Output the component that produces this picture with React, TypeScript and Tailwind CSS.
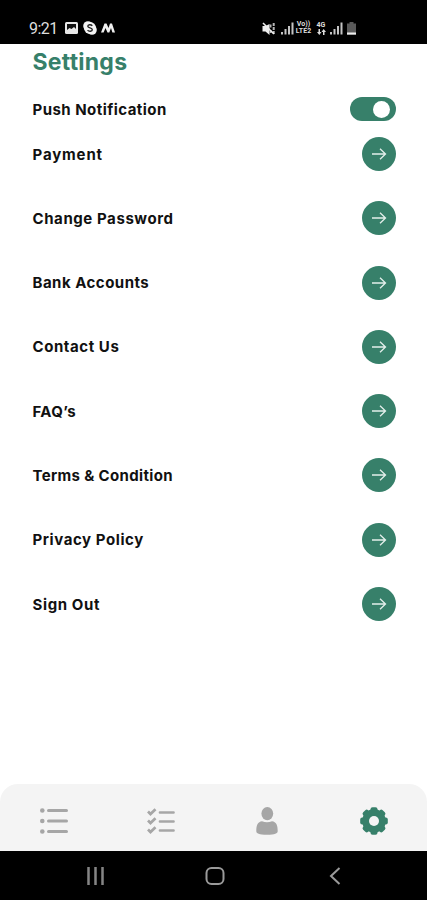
import React from 'react';

interface SettingItem {
  label: string;
  spacing: string;
}

const settings: SettingItem[] = [
  { label: 'Payment', spacing: 'tracking-[0.85px]' },
  { label: 'Change Password', spacing: 'tracking-[0.58px]' },
  { label: 'Bank Accounts', spacing: 'tracking-[0.49px]' },
  { label: 'Contact Us', spacing: 'tracking-[0.57px]' },
  { label: 'FAQ’s', spacing: 'tracking-[0.35px]' },
  { label: 'Terms & Condition', spacing: 'tracking-[0.35px]' },
  { label: 'Privacy Policy', spacing: 'tracking-[0.58px]' },
  { label: 'Sign Out', spacing: 'tracking-[0.62px]' },
];

const SignalIcon: React.FC = () => (
  <svg width="13" height="13" viewBox="0 0 13 13" fill="#c4c4c4">
    <rect x="0" y="10" width="2" height="2.5" />
    <rect x="3.5" y="7" width="2" height="5.5" />
    <rect x="7" y="4" width="2" height="8.5" />
    <rect x="10.5" y="0.5" width="2" height="12" />
  </svg>
);

const StatusBar: React.FC = () => (
  <header className="flex h-11 items-start justify-between bg-black pl-[29px] pr-[71px] pt-[21px] text-[#dedede]">
    <div className="flex h-3.5 items-center">
      <span className="w-[36px] pt-px font-[Roboto] text-[16px] leading-none tracking-[-0.5px]">9:21</span>
      <svg width="13" height="12" viewBox="0 0 13 12">
        <rect width="13" height="12" rx="1.5" fill="#e8e8e8" />
        <path d="M2 2h9v5L9 5 6.5 7 4.5 6 2 8z" fill="#111" />
      </svg>
      <svg className="ml-[5px]" width="14" height="14" viewBox="0 0 14 14">
        <circle cx="5" cy="5" r="4.8" fill="#f4f4f4" />
        <circle cx="9" cy="9" r="4.8" fill="#f4f4f4" />
        <circle cx="7" cy="7" r="6" fill="#f4f4f4" />
        <path d="M9.3 4.8C8 3.2 4.8 3.5 4.8 5.2c0 2 4.5 1.4 4.5 3.5 0 1.9-3.4 2.2-4.7.4" fill="none" stroke="#222" strokeWidth="1.4" />
      </svg>
      <svg className="ml-[4px]" width="14" height="10" viewBox="0 0 14 10" fill="#f0f0f0">
        <path d="M0 9.5 3.5.5h2L7.5 5 9 .5h2l3 9h-2.6L10 5 8.3 9.5H6.5L4.5 5 2.6 9.5z" />
      </svg>
    </div>
    <div className="flex h-3.5 items-center">
      <svg width="14" height="13" viewBox="0 0 14 13">
        <path d="M0.5 4h3l4-2v11L3.5 9.5h-3z" fill="#eee" />
        <path d="M8.5 2.5v3M8.5 8v4M11.7 1v11.5" stroke="#b5b5b5" strokeWidth="2" strokeDasharray="3 1" />
        <path d="m1 1 11 11" stroke="#eee" strokeWidth="1.6" />
      </svg>
      <span className="ml-[5px]"><SignalIcon /></span>
      <div className="ml-px w-[17px] text-center font-[Roboto] text-[7px] font-bold leading-[7px]">
        <div>Vo))</div>
        <div>LTE2</div>
      </div>
      <div className="ml-[4px] flex w-[10px] flex-col items-center font-[Roboto] text-[7px] font-bold leading-[7px]">
        <span>4G</span>
        <svg width="9" height="6" viewBox="0 0 9 6" fill="#ddd">
          <path d="M1.5 0H3v3h1.5L2.3 6 0 3h1.5zM6 6h1.5V3H9L6.7 0 4.5 3H6z" />
        </svg>
      </div>
      <span className="ml-[4px]"><SignalIcon /></span>
      <svg className="ml-[4px]" width="9" height="13" viewBox="0 0 9 13">
        <path d="M2.5 0h4v1.5H9V13H0V1.5h2.5z" fill="#5a5a5a" />
        <rect y="10.5" width="9" height="2" fill="#eee" />
      </svg>
    </div>
  </header>
);

const SettingRow: React.FC<{ item: SettingItem }> = ({ item }) => (
  <li className="flex h-[64.3px] items-start justify-between">
    <span className={`pt-[0.5px] text-[15px] font-bold leading-[34px] ${item.spacing}`}>{item.label}</span>
    <button aria-label={item.label} className="flex size-[34px] items-center justify-center rounded-full bg-[#37806a]">
      <svg width="16" height="14" viewBox="0 0 16 14" fill="none" stroke="#e3eeea" strokeWidth="1.3">
        <path d="M1 7h13.5M9 1.8 14.5 7 9 12.2" />
      </svg>
    </button>
  </li>
);

const TabBar: React.FC = () => (
  <nav className="flex h-[67px] items-center rounded-t-[18px] bg-[#f4f4f4] pl-px pt-[6px]">
    <button aria-label="List" className="flex flex-1 justify-center">
      <svg width="28" height="26" viewBox="0 0 28 26" fill="#a6a6a6" stroke="#a6a6a6" strokeLinecap="round">
        <path d="M8.5 2.5h18M8.5 13h18M8.5 23.5h18" strokeWidth="3" />
        <g stroke="none">
          <circle cx="2.3" cy="2.5" r="2.3" />
          <circle cx="2.3" cy="13" r="2.3" />
          <circle cx="2.3" cy="23.5" r="2.3" />
        </g>
      </svg>
    </button>
    <button aria-label="Tasks" className="flex flex-1 justify-center">
      <svg width="28" height="26" viewBox="0 0 28 26" fill="none" stroke="#a6a6a6" strokeWidth="2.7">
        <path d="M13 4.5h13.5M13 13.5h13.5M13 22.5h13.5" strokeLinecap="round" />
        <path d="m1 3.5 2.5 2.5L8.5 1.2M1 12.5 3.5 15l5-4.8M1 21.5 3.5 24l5-4.8" />
      </svg>
    </button>
    <button aria-label="Profile" className="flex flex-1 justify-center">
      <svg width="22" height="28" viewBox="0 0 22 28" fill="#a6a6a6">
        <ellipse cx="11.3" cy="6.6" rx="5.9" ry="6.6" />
        <path d="M6 14.2q5 2 10 0c4.2.6 5.7 3.8 5.7 9.8 0 2.5-2.7 3.7-10.7 3.7S.3 26.5.3 24c0-6 1.5-9.2 5.7-9.8z" />
      </svg>
    </button>
    <button aria-label="Settings" className="flex flex-1 justify-center">
      <svg width="28" height="28" viewBox="-14 -14 28 28">
        <g fill="#37806a">
          {[0, 45, 90, 135].map((angle) => (
            <rect key={angle} x="-3.5" y="-13.8" width="7" height="27.6" rx="2" transform={`rotate(${angle})`} />
          ))}
          <circle r="11.8" />
        </g>
        <circle r="5" fill="#f4f4f4" />
      </svg>
    </button>
  </nav>
);

const SystemNav: React.FC = () => (
  <footer className="flex h-[49px] items-center bg-black pl-[87px]">
    <svg width="18" height="18" viewBox="0 0 18 18" stroke="#858585" strokeWidth="2.5">
      <path d="M1.5 0v18M8.5 0v18M15.5 0v18" />
    </svg>
    <svg className="ml-[100px]" width="20" height="18" viewBox="0 0 20 18" fill="none" stroke="#9a9a9a" strokeWidth="2">
      <rect x="1.5" y="1" width="17" height="16" rx="5" />
    </svg>
    <svg className="ml-[104px]" width="12" height="18" viewBox="0 0 12 18" fill="none" stroke="#9a9a9a" strokeWidth="2">
      <path d="M10.5 1 2 9l8.5 8" />
    </svg>
  </footer>
);

export default function App() {
  return (
    <div className="flex h-[900px] w-[427px] flex-col overflow-hidden bg-white font-[Inter,sans-serif] text-[#111]">
      <StatusBar />
      <main className="flex-1 pl-[32.5px] pr-[31.5px]">
        <h1 className="pt-[2px] text-[23px] font-bold leading-8 tracking-[0.25px] text-[#37806a]">Settings</h1>
        <div className="mt-[19px] flex h-6 items-center justify-between">
          <span className="pt-0.5 text-[15px] font-bold tracking-[0.46px]">Push Notification</span>
          <button role="switch" aria-checked="true" aria-label="Push Notification" className="flex h-6 w-[46px] items-center justify-end rounded-full bg-[#37806a] pr-1.5">
            <span className="size-[17px] rounded-full bg-white" />
          </button>
        </div>
        <ul className="mt-4">
          {settings.map((item) => (
            <SettingRow key={item.label} item={item} />
          ))}
        </ul>
      </main>
      <TabBar />
      <SystemNav />
    </div>
  );
}
